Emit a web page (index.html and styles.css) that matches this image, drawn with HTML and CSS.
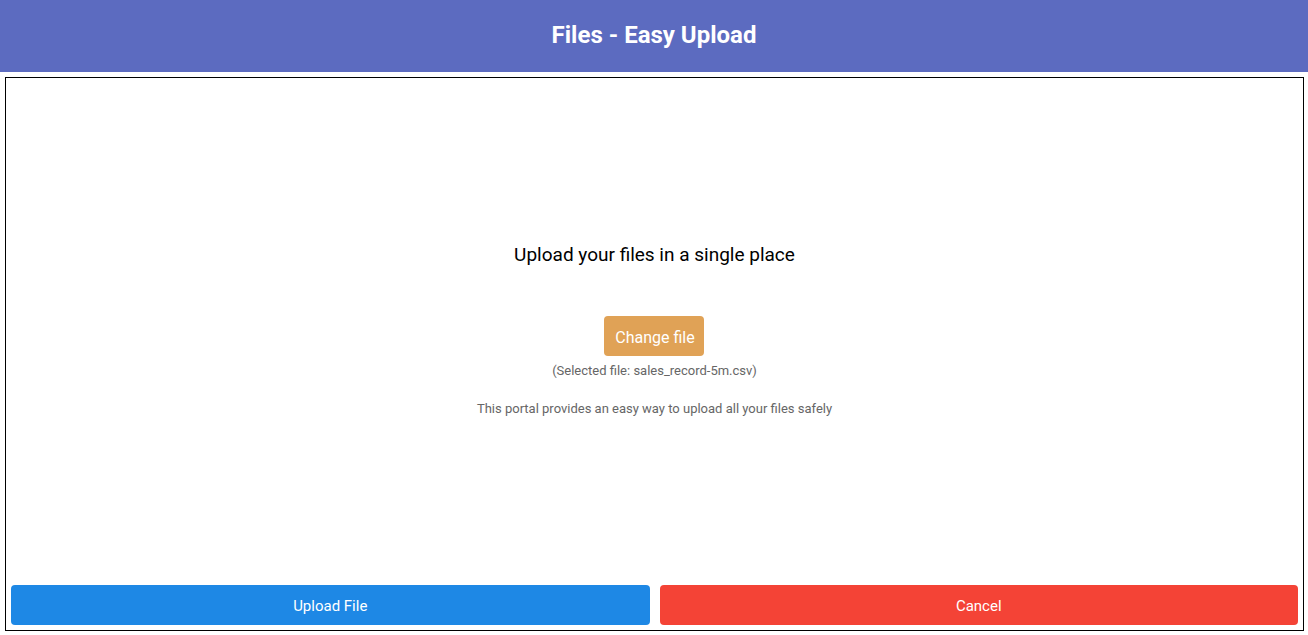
FILE: index.html
```html
<!DOCTYPE html>
<html lang="en">
<head>
<meta charset="utf-8">
<title>Files - Easy Upload</title>
<link rel="stylesheet" href="styles.css">
</head>
<body>
<header class="topbar"><h1 class="title">Files - Easy Upload</h1></header>
<main class="panel">
  <section class="content">
    <h2 class="heading">Upload your files in a single place</h2>
    <button class="btn btn-change" type="button">Change file</button>
    <p class="selected">(Selected file: sales_record-5m.csv)</p>
    <p class="note">This portal provides an easy way to upload all your files safely</p>
  </section>
  <footer class="actions">
    <button class="btn btn-upload" type="button">Upload File</button>
    <button class="btn btn-cancel" type="button">Cancel</button>
  </footer>
</main>
</body>
</html>
```
FILE: styles.css
```css
* { box-sizing: border-box; }
html, body { margin: 0; padding: 0; }
body {
  font-family: Roboto, "Liberation Sans", Arial, sans-serif;
  background: #ffffff;
  height: 635px;
  overflow: hidden;
}
.topbar {
  height: 72px;
  background: #5c6bc0;
  display: flex;
  align-items: center;
  justify-content: center;
}
.title {
  margin: 0;
  color: #ffffff;
  font-size: 24px;
  font-weight: 700;
  line-height: 28px;
  margin-top: -2px;
}
.panel {
  margin: 5px 4px 0 5px;
  height: 554px;
  border: 1px solid #000000;
  display: flex;
  flex-direction: column;
}
.content {
  flex: 1;
  display: flex;
  flex-direction: column;
  align-items: center;
  justify-content: center;
  padding-bottom: 3px;
}
.heading {
  margin: 0;
  font-size: 19px;
  font-weight: 400;
  line-height: 22px;
  color: #000000;
}
.btn {
  border: none;
  border-radius: 4px;
  font-family: Roboto, "Liberation Sans", Arial, sans-serif;
  color: #ffffff;
  cursor: pointer;
}
.btn-change {
  margin-top: 50px;
  margin-right: 1px;
  width: 100px;
  height: 40px;
  padding: 3px 0 0 2px;
  font-size: 16px;
  background: #e0a256;
}
.selected {
  margin: 7px 0 0 0;
  font-size: 13px;
  line-height: 16px;
  color: #666666;
}
.note {
  margin: 22px 0 0 0;
  font-size: 13px;
  line-height: 16px;
  color: #666666;
}
.actions {
  display: flex;
  gap: 10px;
  padding: 0 5px 5px 5px;
}
.actions .btn {
  flex: 1;
  height: 40px;
  font-size: 15px;
  padding-top: 2px;
}
.btn-upload { background: #1e88e5; }
.btn-cancel { background: #f44336; }
```
